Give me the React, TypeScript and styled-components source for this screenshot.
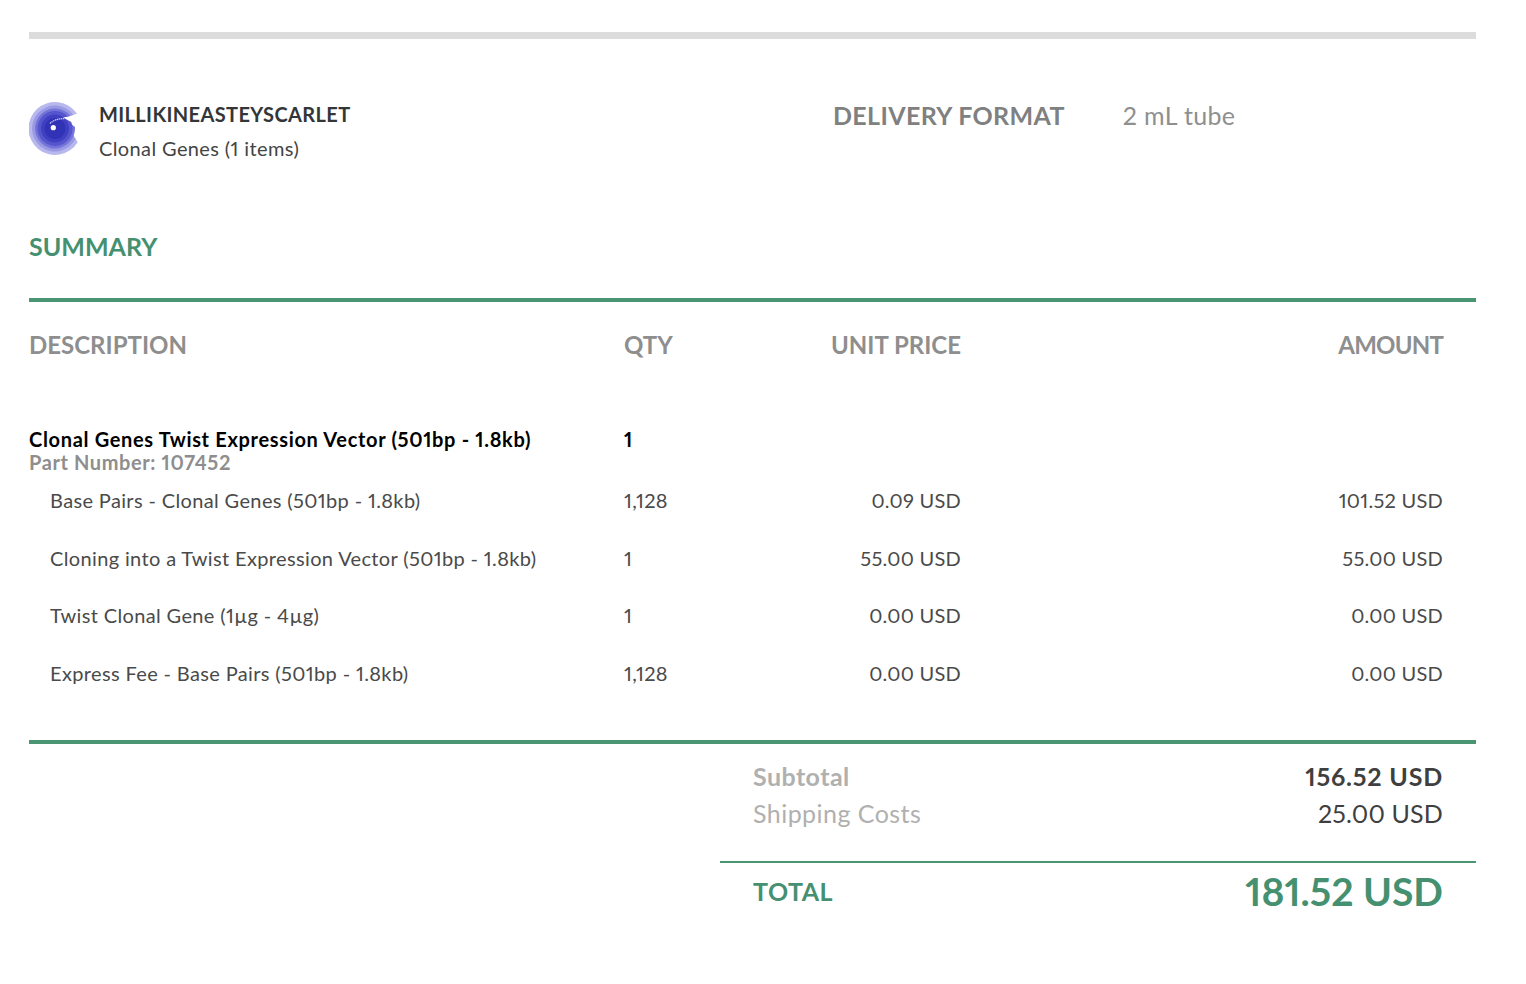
import React from "react";
import styled, { createGlobalStyle } from "styled-components";

const Global = createGlobalStyle`
  html, body { margin: 0; padding: 0; background: #fff; }
  body { font-family: "Lato", "Open Sans", sans-serif; color: #3c3c3c; font-variant-numeric: proportional-nums; }
`;

const Page = styled.div`
  width: 1447px;
  margin-left: 29px;
  padding-top: 32px;
  height: 952px;
`;
const TopRule = styled.div`
  height: 7px;
  background: #dcdcdc;
`;
const Header = styled.div`
  display: flex;
  margin-top: 63px;
  height: 54px;
`;
const Vendor = styled.div`
  display: flex;
  width: 804px;
  gap: 20px;
`;
const VendorText = styled.div`
  margin-top: -1px;
`;
const VendorName = styled.div`
  font-size: 20px;
  font-weight: 700;
  line-height: 26px;
  letter-spacing: 0.37px;
  color: #333638;
`;
const VendorSub = styled.div`
  font-size: 20px;
  line-height: 26px;
  margin-top: 8px;
  letter-spacing: 0.38px;
  color: #444;
`;
const Format = styled.div`
  display: flex;
  gap: 58px;
  font-size: 25px;
  line-height: 28px;
  margin-top: -1px;
  height: 28px;
`;
const FormatLabel = styled.span`
  font-weight: 700;
  letter-spacing: 0.35px;
  color: #808080;
`;
const FormatValue = styled.span`
  letter-spacing: 0.35px;
  color: #8f8f8f;
`;
const SectionTitle = styled.h2`
  margin: 75px 0 37px;
  font-size: 25px;
  line-height: 30px;
  font-weight: 700;
  color: #459070;
`;
const GreenRule = styled.div<{ $h: number }>`
  height: ${(p) => p.$h}px;
  background: #4a9572;
`;
const Row = styled.div<{ $h?: number }>`
  display: grid;
  grid-template-columns: 595px 120px 217px 482px;
  height: ${(p) => p.$h ?? 57.7}px;
  align-items: center;
  font-size: 20px;
  letter-spacing: 0.25px;
  color: #4a4a4a;
`;
const HeadRow = styled(Row)`
  font-size: 24px;
  font-weight: 700;
  letter-spacing: 0;
  color: #8e8e8e;
  margin-top: 22px;
`;
const Right = styled.div`
  text-align: right;
`;
const AmountHead = styled(Right)`
  letter-spacing: -0.8px;
`;
const Indent = styled.div`
  padding-left: 21px;
  letter-spacing: 0.36px;
`;
const Product = styled.div`
  display: grid;
  grid-template-columns: 595px 120px;
  margin-top: 64px;
  color: #000;
  font-size: 20px;
  font-weight: 700;
  line-height: 23px;
  letter-spacing: 0.67px;
`;
const PartNumber = styled.div`
  color: #8e8e8e;
  letter-spacing: 0.6px;
`;
const Lines = styled.div`
  margin-top: -3px;
  margin-bottom: 38px;
`;
const Totals = styled.div`
  margin-left: 691px;
  display: flex;
  flex-direction: column;
`;
const TotalsRows = styled.div`
  padding: 14px 33px 0 33px;
  height: 117px;
  box-sizing: border-box;
`;
const Line = styled.div<{ $bold?: boolean }>`
  display: flex;
  justify-content: space-between;
  font-size: 25px;
  line-height: 37px;
  font-weight: ${(p) => (p.$bold ? 700 : 400)};
  color: #3f3f3f;
`;
const Muted = styled.span`
  color: #b0b0b0;
  letter-spacing: 0.45px;
`;
const Money = styled.span<{ $bold?: boolean }>`
  letter-spacing: ${(p) => (p.$bold ? 0.8 : 0.15)}px;
`;
const Grand = styled.div`
  display: flex;
  justify-content: space-between;
  align-items: center;
  padding: 3px 33px 0;
  color: #459070;
  font-weight: 700;
`;
const GrandLabel = styled.span`
  font-size: 25px;
  letter-spacing: 0.5px;
`;
const GrandValue = styled.span`
  font-size: 39px;
  line-height: 50px;
`;

const layers: [number, string, number, number][] = [
  [26.5, "#b8b8ee", -33.5, 31],
  [23, "#9a9ae4", -36, 28],
  [20, "#7373d9", -39, -4],
  [17.5, "#5555ce", -44, -22],
  [14, "#3f3fc2", -52, -40],
  [10.5, "#3232b6", -70, -62],
];

const polar = (r: number, deg: number) => {
  const a = (deg * Math.PI) / 180;
  return `${(r * Math.cos(a)).toFixed(2)} ${(r * Math.sin(a)).toFixed(2)}`;
};

const Logo = () => (
  <svg width="50" height="54" viewBox="0 0 50 54" style={{ flex: "none" }}>
    <g transform="translate(26 26.5)" style={{ filter: "blur(0.35px)" }}>
      {layers.map(([r, c, a1, a2]) => (
        <path key={r} fill={c} d={`M8 -11L${polar(r, a1)}A${r} ${r} 0 1 0 ${polar(r, a2)}Z`} />
      ))}
      <path d="M-5 -5Q0 -10 10 -10" stroke="#c9c9f3" strokeWidth="1.3" fill="none" strokeDasharray="1.4 0.6" />
      <circle cx="-1.7" cy="-0.8" r="2.6" fill="#fff" />
    </g>
  </svg>
);

const lines = [
  ["Base Pairs - Clonal Genes (501bp - 1.8kb)", "1,128", "0.09 USD", "101.52 USD"],
  ["Cloning into a Twist Expression Vector (501bp - 1.8kb)", "1", "55.00 USD", "55.00 USD"],
  ["Twist Clonal Gene (1µg - 4µg)", "1", "0.00 USD", "0.00 USD"],
  ["Express Fee - Base Pairs (501bp - 1.8kb)", "1,128", "0.00 USD", "0.00 USD"],
];

export default function App() {
  return (
    <Page>
      <Global />
      <TopRule />
      <Header>
        <Vendor>
          <Logo />
          <VendorText>
            <VendorName>MILLIKINEASTEYSCARLET</VendorName>
            <VendorSub>Clonal Genes (1 items)</VendorSub>
          </VendorText>
        </Vendor>
        <Format>
          <FormatLabel>DELIVERY FORMAT</FormatLabel>
          <FormatValue>2 mL tube</FormatValue>
        </Format>
      </Header>
      <SectionTitle>SUMMARY</SectionTitle>
      <GreenRule $h={4} />
      <HeadRow $h={40}>
        <div>DESCRIPTION</div>
        <div>QTY</div>
        <Right>UNIT PRICE</Right>
        <AmountHead>AMOUNT</AmountHead>
      </HeadRow>
      <Product>
        <div>
          Clonal Genes Twist Expression Vector (501bp - 1.8kb)
          <PartNumber>Part Number: 107452</PartNumber>
        </div>
        <div>1</div>
      </Product>
      <Lines>
        {lines.map((l) => (
          <Row key={l[0]}>
            <Indent>{l[0]}</Indent>
            <div>{l[1]}</div>
            <Right>{l[2]}</Right>
            <Right>{l[3]}</Right>
          </Row>
        ))}
      </Lines>
      <GreenRule $h={4} />
      <Totals>
        <TotalsRows>
          <Line $bold>
            <Muted>Subtotal</Muted>
            <Money $bold>156.52 USD</Money>
          </Line>
          <Line>
            <Muted>Shipping Costs</Muted>
            <Money>25.00 USD</Money>
          </Line>
        </TotalsRows>
        <GreenRule $h={2} />
        <Grand>
          <GrandLabel>TOTAL</GrandLabel>
          <GrandValue>181.52 USD</GrandValue>
        </Grand>
      </Totals>
    </Page>
  );
}
